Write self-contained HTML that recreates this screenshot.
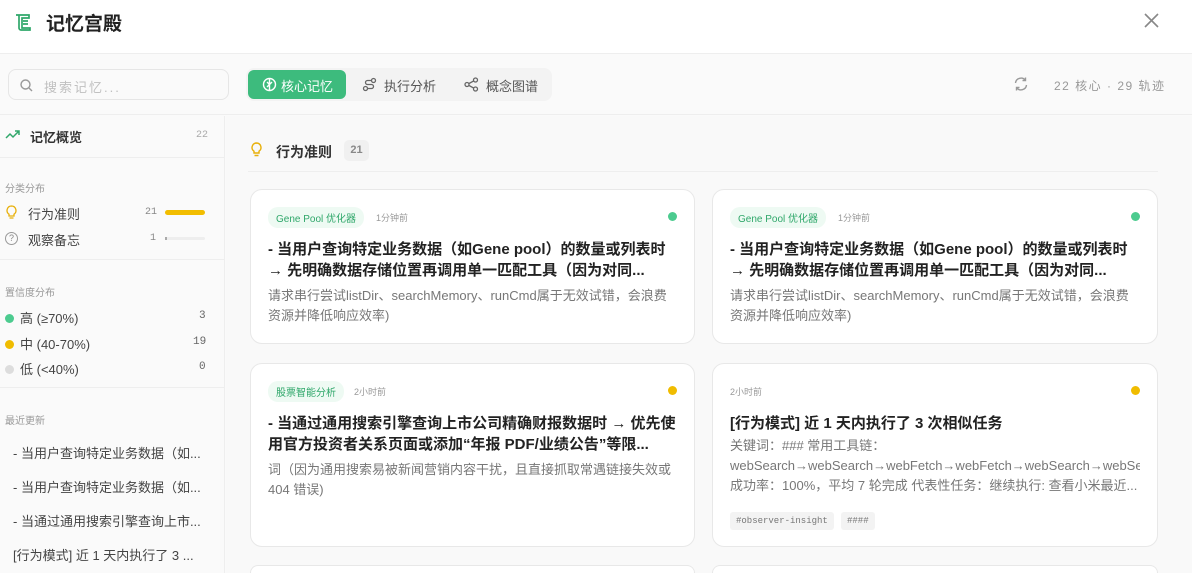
<!DOCTYPE html>
<html><head><meta charset="utf-8"><style>
*{box-sizing:border-box;margin:0;padding:0}
html,body{width:1192px;height:573px;overflow:hidden}
body{background:#fafafa;font-family:"Liberation Sans","Noto Sans CJK SC",sans-serif;color:#333;position:relative}
.hdr{position:absolute;left:0;top:0;width:1192px;height:54px;background:#fff;border-bottom:1px solid #eee}
.hdr .t{position:absolute;left:46px;top:9px;font-size:19px;font-weight:bold;color:#222}
.tb{position:absolute;left:0;top:55px;width:1192px;height:60px;background:#fafafa;border-bottom:1px solid #eee}
.search{position:absolute;left:8px;top:14px;width:221px;height:31px;border:1px solid #e6e6e6;border-radius:8px;background:#fafafa;font-size:13px;color:#c0c0c0;padding:7px 0 0 35px;letter-spacing:2px}
.tabs{position:absolute;left:246px;top:13px;width:306px;height:33px;background:#f3f3f3;border-radius:8px}
.tab{position:absolute;top:2px;height:29px;font-size:13px;color:#555;padding-top:6px}
.tab.on{background:#3dbb7d;color:#fff;border-radius:6px;left:2px;width:98px;padding-left:33px}
.side{position:absolute;left:0;top:116px;width:225px;height:457px;background:#fafafa;border-right:1px solid #eee;overflow:hidden}
.main{position:absolute;left:226px;top:116px;width:966px;height:457px;background:#f9f9f9;overflow:hidden}
.sec{border-bottom:1px solid #eee}
.lbl{font-size:10px;color:#999;position:absolute;left:5px}
.row{position:absolute;left:5px;font-size:13px;color:#444}
.num{position:absolute;font-size:11px;color:#666;font-family:"Liberation Mono",monospace}
.dot{display:inline-block;width:9px;height:9px;border-radius:50%;margin-right:6px;vertical-align:0}
.card{position:absolute;background:#fff;border:1px solid #e8e8e8;border-radius:12px}
.tag{position:absolute;left:17px;top:17px;background:#eefaf3;color:#2fa76a;font-size:10px;padding:3px 8px;border-radius:10px}
.time{position:absolute;font-size:9px;color:#999;top:21px}
.cd{position:absolute;right:17px;top:22px;width:9px;height:9px;border-radius:50%}
.ti{position:absolute;left:17px;top:49px;width:408px;font-size:15px;font-weight:bold;color:#222;line-height:21px}
.de{position:absolute;left:17px;width:410px;font-size:13px;color:#777;line-height:20px}
.rec{position:absolute;left:13px;font-size:13px;color:#444}
</style></head><body>
<div class="hdr">
<svg style="position:absolute;left:13px;top:12px" width="20" height="20" viewBox="0 0 20 20" fill="none" stroke="#2fa76a" stroke-width="1.7"><path d="M3 3h3v13a2 2 0 0 0 2 2h9v-2H9V6h7V3H6"/><path d="M10 9h5M10 12h5"/></svg>
<div class="t">记忆宫殿</div>
<svg style="position:absolute;left:1144px;top:13px" width="15" height="15" viewBox="0 0 15 15" stroke="#888" stroke-width="1.6"><path d="M1 1L14 14M14 1L1 14"/></svg>
</div>
<div class="tb">
<div class="search"><svg style="position:absolute;left:11px;top:9px" width="13" height="13" viewBox="0 0 13 13" fill="none" stroke="#999" stroke-width="1.4"><circle cx="5.5" cy="5.5" r="4.5"/><path d="M9 9l3 3"/></svg>搜索记忆...</div>
<div class="tabs">
<div class="tab on"><svg style="position:absolute;left:14px;top:7px" width="15" height="15" viewBox="0 0 15 15" fill="none" stroke="#fff" stroke-width="1.4"><circle cx="7.5" cy="7.5" r="6"/><path d="M7.5 2v11M5 5l2.5 2.5L10 5M5 10l2.5-2.5"/></svg>核心记忆</div>
<div class="tab" style="left:116px;padding-left:22px"><svg style="position:absolute;left:0;top:7px" width="15" height="15" viewBox="0 0 15 15" fill="none" stroke="#666" stroke-width="1.3"><circle cx="3.5" cy="11.5" r="2"/><circle cx="11.5" cy="3.5" r="2"/><path d="M5.5 11.5h4a2 2 0 0 0 0-4h-4a2 2 0 0 1 0-4h4"/></svg>执行分析</div>
<div class="tab" style="left:218px;padding-left:22px"><svg style="position:absolute;left:0;top:7px" width="15" height="15" viewBox="0 0 15 15" fill="none" stroke="#666" stroke-width="1.3"><circle cx="3" cy="7.5" r="2"/><circle cx="11.5" cy="3" r="2"/><circle cx="11.5" cy="12" r="2"/><path d="M5 6.5l4.7-2.6M5 8.5l4.7 2.6"/></svg>概念图谱</div>
</div>
<svg style="position:absolute;left:1013px;top:21px" width="16" height="16" viewBox="0 0 16 16" fill="none" stroke="#999" stroke-width="1.4"><path d="M2.5 7a5.5 5.5 0 0 1 10-2.5M13.5 9a5.5 5.5 0 0 1-10 2.5M12.5 1.5v3h-3M3.5 14.5v-3h3"/></svg>
<div style="position:absolute;left:1054px;top:22px;font-size:12px;color:#999;letter-spacing:1.5px">22 核心 · 29 轨迹</div>
</div>
<div class="side">
<div class="sec" style="position:absolute;left:0;top:0;width:224px;height:42px"></div>
<svg style="position:absolute;left:5px;top:12px" width="16" height="12" viewBox="0 0 16 12" fill="none" stroke="#2fa76a" stroke-width="1.5"><path d="M1 10l4-4 3 3 6-6M10 3h4v4"/></svg>
<div style="position:absolute;left:30px;top:11px;font-size:13px;font-weight:bold;color:#333">记忆概览</div>
<div class="num" style="left:196px;top:14px;color:#aaa;font-size:10px">22</div>
<div class="lbl" style="top:64px">分类分布</div>
<svg style="position:absolute;left:6px;top:89px" width="11" height="15" viewBox="0 0 11 15" fill="none" stroke="#e8b00a" stroke-width="1.3"><path d="M5.5 1a4.5 4.5 0 0 0-2.5 8.2V11h5V9.2A4.5 4.5 0 0 0 5.5 1zM3.5 13h4"/></svg>
<div class="row" style="left:28px;top:88px">行为准则</div>
<div class="num" style="left:145px;top:91px;color:#888;font-size:10px">21</div>
<div style="position:absolute;left:165px;top:94px;width:40px;height:5px;border-radius:3px;background:#f2bd00"></div>
<div style="position:absolute;left:5px;top:116px;width:13px;height:13px;border:1px solid #999;border-radius:50%;font-size:9px;color:#888;text-align:center;line-height:11px">?</div>
<div class="row" style="left:28px;top:114px">观察备忘</div>
<div class="num" style="left:150px;top:117px;color:#888;font-size:10px">1</div>
<div style="position:absolute;left:165px;top:121px;width:40px;height:3px;border-radius:2px;background:#eee"><div style="width:2px;height:3px;background:#aaa"></div></div>
<div class="sec" style="position:absolute;left:0;top:42px;width:224px;height:102px"></div>
<div class="lbl" style="top:168px">置信度分布</div>
<div class="row" style="top:192px"><span class="dot" style="background:#4ccb8f"></span>高 (≥70%)</div>
<div class="num" style="left:199px;top:194px">3</div>
<div class="row" style="top:218px"><span class="dot" style="background:#f0bc00"></span>中 (40-70%)</div>
<div class="num" style="left:193px;top:220px">19</div>
<div class="row" style="top:243px"><span class="dot" style="background:#ddd"></span>低 (&lt;40%)</div>
<div class="num" style="left:199px;top:245px">0</div>
<div class="sec" style="position:absolute;left:0;top:144px;width:224px;height:128px"></div>
<div class="lbl" style="top:296px">最近更新</div>
<div class="rec" style="top:327px">- 当用户查询特定业务数据（如...</div>
<div class="rec" style="top:361px">- 当用户查询特定业务数据（如...</div>
<div class="rec" style="top:395px">- 当通过通用搜索引擎查询上市...</div>
<div class="rec" style="top:429px">[行为模式] 近 1 天内执行了 3 ...</div>
</div>
<div class="main">
<svg style="position:absolute;left:25px;top:26px" width="11" height="16" viewBox="0 0 11 16" fill="none" stroke="#e8b00a" stroke-width="1.4"><path d="M5.5 1a4.5 4.5 0 0 0-2.5 8.2V11h5V9.2A4.5 4.5 0 0 0 5.5 1zM3.5 13.5h4"/></svg>
<div style="position:absolute;left:50px;top:26px;font-size:14px;font-weight:bold;color:#333">行为准则</div>
<div style="position:absolute;left:118px;top:24px;width:25px;height:21px;background:#f0f0f0;border-radius:5px;font-size:11px;color:#888;text-align:center;line-height:21px;font-weight:bold">21</div>
<div style="position:absolute;left:22px;top:55px;width:910px;border-top:1px solid #eee"></div>

<div class="card" style="left:24px;top:73px;width:445px;height:155px">
<div class="tag">Gene Pool 优化器</div><div class="time" style="left:125px">1分钟前</div><div class="cd" style="background:#4ccb8f"></div>
<div class="ti">- 当用户查询特定业务数据（如Gene pool）的数量或列表时<br>→ 先明确数据存储位置再调用单一匹配工具（因为对同...</div>
<div class="de" style="top:96px">请求串行尝试listDir、searchMemory、runCmd属于无效试错，会浪费<br>资源并降低响应效率)</div>
</div>
<div class="card" style="left:486px;top:73px;width:446px;height:155px">
<div class="tag">Gene Pool 优化器</div><div class="time" style="left:125px">1分钟前</div><div class="cd" style="background:#4ccb8f"></div>
<div class="ti">- 当用户查询特定业务数据（如Gene pool）的数量或列表时<br>→ 先明确数据存储位置再调用单一匹配工具（因为对同...</div>
<div class="de" style="top:96px">请求串行尝试listDir、searchMemory、runCmd属于无效试错，会浪费<br>资源并降低响应效率)</div>
</div>
<div class="card" style="left:24px;top:247px;width:445px;height:184px">
<div class="tag">股票智能分析</div><div class="time" style="left:103px">2小时前</div><div class="cd" style="background:#f0bc00"></div>
<div class="ti">- 当通过通用搜索引擎查询上市公司精确财报数据时 → 优先使<br>用官方投资者关系页面或添加“年报 PDF/业绩公告”等限...</div>
<div class="de" style="top:96px">词（因为通用搜索易被新闻营销内容干扰，且直接抓取常遇链接失效或<br>404 错误)</div>
</div>
<div class="card" style="left:486px;top:247px;width:446px;height:184px">
<div class="time" style="left:17px">2小时前</div><div class="cd" style="background:#f0bc00"></div>
<div class="ti">[行为模式] 近 1 天内执行了 3 次相似任务</div>
<div class="de" style="top:72px;white-space:nowrap;overflow:hidden;width:410px">关键词：### 常用工具链：<br>webSearch→webSearch→webFetch→webFetch→webSearch→webSearch<br>成功率：100%，平均 7 轮完成 代表性任务：继续执行: 查看小米最近...</div>
<div style="position:absolute;left:17px;top:148px;background:#f3f3f3;border-radius:3px;font-family:'Liberation Mono',monospace;font-size:9px;color:#777;padding:4px 6px">#observer-insight</div>
<div style="position:absolute;left:128px;top:148px;background:#f3f3f3;border-radius:3px;font-family:'Liberation Mono',monospace;font-size:9px;color:#777;padding:4px 6px">####</div>
</div>
<div class="card" style="left:24px;top:449px;width:445px;height:8px;border-bottom:none;border-radius:12px 12px 0 0"></div>
<div class="card" style="left:486px;top:449px;width:446px;height:8px;border-bottom:none;border-radius:12px 12px 0 0"></div>
</div>
</body></html>
